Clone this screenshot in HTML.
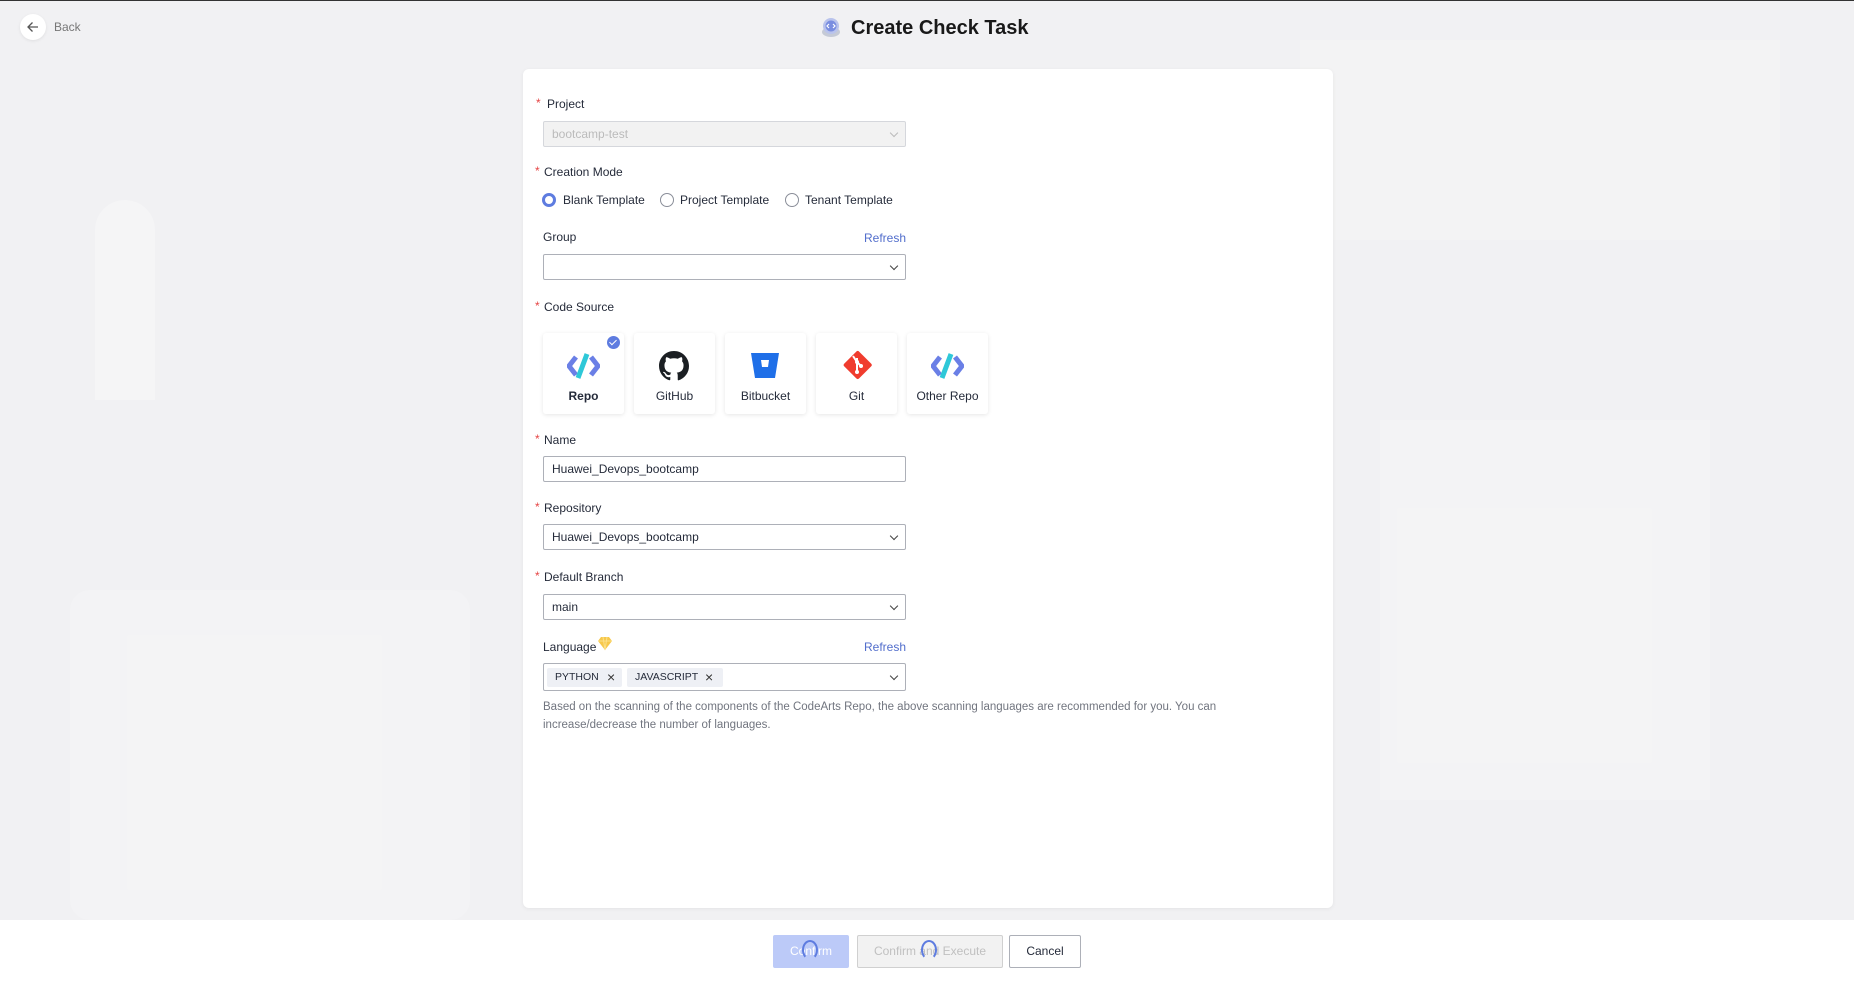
<!DOCTYPE html>
<html><head><meta charset="utf-8"><style>
*{box-sizing:border-box;margin:0;padding:0}
body{width:1854px;height:981px;overflow:hidden;background:#f1f1f3;font-family:"Liberation Sans",Arial,sans-serif;color:#252b3a;position:relative;font-size:12px}
.a{position:absolute}
.lbl{position:absolute;left:544px;font-size:12px;color:#252b3a}
.st{color:#e54545;position:absolute;left:-9px;top:-1px}
.inp{position:absolute;left:543px;width:363px;height:26px;border:1px solid #adb0b8;border-radius:2px;background:#fff;font-size:12px;padding-left:8px;line-height:24px;color:#252b3a}
.chev{position:absolute;right:8px;top:8px;width:6px;height:6px;border-right:1.2px solid #444;border-bottom:1.2px solid #444;transform:rotate(45deg)}
.radio{position:absolute;top:193px;width:14px;height:14px;border:1px solid #8a8e99;border-radius:50%;background:#fff}
.rt{position:absolute;top:193px;font-size:12px}
.card{position:absolute;top:333px;width:81px;height:81px;background:#fff;border-radius:3px;box-shadow:0 1px 4px rgba(0,0,0,.1)}
.card .t{position:absolute;top:56px;width:100%;text-align:center;font-size:12px;color:#252b3a}
.card svg{position:absolute;left:24px;top:18px}
.link{position:absolute;color:#526ecc;font-size:12px}
.tag{position:absolute;top:668px;height:19px;background:#eef0f5;border-radius:2px;font-size:10.5px;line-height:19px;padding-left:8px;color:#252b3a}
.x{position:absolute;top:669px;font-size:14px;line-height:17px;color:#333}
.btn{position:absolute;top:935px;height:33px;border-radius:2px;font-size:12px;text-align:center;line-height:31px}
</style></head><body>
<div class="a" style="left:0;top:0;width:1854px;height:1px;background:#333"></div>
<div class="a" style="left:70px;top:590px;width:400px;height:330px;background:rgba(255,255,255,.2);border-radius:20px"></div>
<div class="a" style="left:1380px;top:420px;width:330px;height:380px;background:rgba(255,255,255,.2)"></div>
<div class="a" style="left:1300px;top:40px;width:480px;height:200px;background:rgba(255,255,255,.15)"></div>
<div class="a" style="left:95px;top:200px;width:60px;height:200px;background:rgba(255,255,255,.3);border-radius:30px 30px 0 0"></div>
<div class="a" style="left:20px;top:14px;width:26px;height:26px;border-radius:50%;background:#fff;box-shadow:0 1px 3px rgba(0,0,0,.08)"></div>
<svg class="a" style="left:26px;top:20px" width="14" height="14" viewBox="0 0 14 14"><path d="M12 7H2M6.5 2.5L2 7l4.5 4.5" fill="none" stroke="#555" stroke-width="1.3"/></svg>
<div class="a" style="left:54px;top:20px;font-size:12px;color:#777">Back</div>
<svg class="a" style="left:820px;top:17px" width="22" height="22" viewBox="0 0 22 22"><ellipse cx="11" cy="15" rx="9" ry="5" fill="#c5cad6"/><circle cx="11" cy="9" r="8" fill="#b9c3ec"/><circle cx="11" cy="9" r="5.5" fill="#7a8ee0"/><path d="M9 7l-2 2 2 2M13 7l2 2-2 2" stroke="#fff" stroke-width="1.2" fill="none"/></svg>
<div class="a" style="left:851px;top:17px;font-size:20px;font-weight:bold;color:#191919">Create Check Task</div>
<div class="a" style="left:523px;top:69px;width:810px;height:839px;background:#fff;border-radius:6px;box-shadow:0 1px 4px rgba(0,0,0,.06)"></div>
<div class="lbl" style="top:97px;left:547px"><span class="st" style="left:-11px">*</span>Project</div>
<div class="inp" style="top:121px;background:#f2f2f2;border-color:#d5d7dc;color:#bbb">bootcamp-test<div class="chev" style="border-color:#bbb"></div></div>
<div class="lbl" style="top:165px"><span class="st">*</span>Creation Mode</div>
<div class="radio" style="left:542px;border:3px solid #5e7ce0"></div><div class="rt" style="left:563px">Blank Template</div>
<div class="radio" style="left:660px"></div><div class="rt" style="left:680px">Project Template</div>
<div class="radio" style="left:785px"></div><div class="rt" style="left:805px">Tenant Template</div>
<div class="lbl" style="top:230px;left:543px">Group</div>
<div class="link" style="left:864px;top:231px">Refresh</div>
<div class="inp" style="top:254px"><div class="chev"></div></div>
<div class="lbl" style="top:300px"><span class="st">*</span>Code Source</div>
<div class="card" style="left:543px"><svg width="33" height="30" viewBox="0 0 33 30"><path d="M9 6L2 15l7 9" fill="none" stroke="#6a7fe6" stroke-width="5"/><path d="M24 6l7 9-7 9" fill="none" stroke="#6a7fe6" stroke-width="5"/><path d="M20 3L11 27" stroke="#2ec8d8" stroke-width="5"/></svg><div class="t" style="font-weight:bold">Repo</div>
<div class="a" style="right:4px;top:3px;width:13px;height:13px;border-radius:50%;background:#5e7ce0"><div class="a" style="left:4px;top:2px;width:4px;height:7px;border-right:1.5px solid #fff;border-bottom:1.5px solid #fff;transform:rotate(45deg)"></div></div></div>
<div class="card" style="left:634px"><svg width="32" height="30" viewBox="0 0 16 16"><path fill="#1b1f23" d="M8 0C3.58 0 0 3.58 0 8c0 3.540 2.29 6.53 5.47 7.59.4.07.55-.17.55-.38v-1.33c-2.23.48-2.7-1.07-2.7-1.07-.36-.92-.89-1.170-.89-1.17-.73-.5.05-.49.05-.49.8.06 1.23.82 1.23.82.71 1.22 1.87.87 2.33.66.07-.52.28-.87.5-1.07-1.78-.2-3.64-.89-3.64-3.95 0-.87.31-1.59.82-2.15-.08-.2-.36-1.02.08-2.12 0 0 .67-.21 2.2.82a7.6 7.6 0 014 0c1.53-1.04 2.2-.82 2.2-.82.44 1.1.16 1.92.08 2.12.51.56.82 1.27.82 2.15 0 3.07-1.87 3.75-3.65 3.95.29.25.54.73.54 1.48v2.2c0 .21.15.46.55.38A8 8 0 0016 8c0-4.42-3.58-8-8-8z"/></svg><div class="t">GitHub</div></div>
<div class="card" style="left:725px"><svg width="32" height="30" viewBox="0 0 32 30"><path d="M2 2h28l-4 25H6z" fill="#1f6fe8"/><path d="M12 9h8l-1 7h-6z" fill="#fff"/></svg><div class="t">Bitbucket</div></div>
<div class="card" style="left:816px"><svg width="34" height="32" viewBox="0 0 34 32" style="top:16px"><rect x="7" y="5" width="21" height="21" rx="2" transform="rotate(45 17 16)" fill="#f03c2e"/><path d="M17 9v14M13 7l4 6 4 4" stroke="#fff" stroke-width="2" fill="none"/><circle cx="17" cy="13" r="2" fill="#fff"/><circle cx="17" cy="23" r="2" fill="#fff"/><circle cx="21" cy="17" r="2" fill="#fff"/></svg><div class="t">Git</div></div>
<div class="card" style="left:907px"><svg width="33" height="30" viewBox="0 0 33 30"><path d="M9 6L2 15l7 9" fill="none" stroke="#6a7fe6" stroke-width="5"/><path d="M24 6l7 9-7 9" fill="none" stroke="#6a7fe6" stroke-width="5"/><path d="M20 3L11 27" stroke="#2ec8d8" stroke-width="5"/></svg><div class="t">Other Repo</div></div>
<div class="lbl" style="top:433px"><span class="st">*</span>Name</div>
<div class="inp" style="top:456px">Huawei_Devops_bootcamp</div>
<div class="lbl" style="top:501px"><span class="st">*</span>Repository</div>
<div class="inp" style="top:524px">Huawei_Devops_bootcamp<div class="chev"></div></div>
<div class="lbl" style="top:570px"><span class="st">*</span>Default Branch</div>
<div class="inp" style="top:594px">main<div class="chev"></div></div>
<div class="lbl" style="top:640px;left:543px">Language</div>
<svg class="a" style="left:598px;top:636px" width="14" height="15" viewBox="0 0 14 15"><path d="M3 1h8l3 4-7 9-7-9z" fill="#f7c84a"/><path d="M0 5h14M5 1l2 13 2-13" stroke="#fbe08a" stroke-width="1" fill="none"/></svg>
<div class="link" style="left:864px;top:640px">Refresh</div>
<div class="inp" style="top:663px;height:28px"><div class="chev" style="top:9px"></div></div>
<div class="tag" style="left:547px;width:75px">PYTHON</div><div class="x" style="left:607px">×</div>
<div class="tag" style="left:627px;width:96px">JAVASCRIPT</div><div class="x" style="left:705px">×</div>
<div class="a" style="left:543px;top:698px;width:720px;font-size:11.5px;line-height:18px;color:#71757f">Based on the scanning of the components of the CodeArts Repo, the above scanning languages are recommended for you. You can increase/decrease the number of languages.</div>
<div class="a" style="left:0;top:920px;width:1854px;height:61px;background:#fff"></div>
<div class="btn" style="left:773px;width:76px;background:#bccaf8;color:#fff;border:1px solid #bccaf8">Confirm</div>
<div class="btn" style="left:857px;width:146px;background:#f2f2f2;color:#c0c0c0;border:1px solid #d0d0d0">Confirm and Execute</div>
<div class="btn" style="left:1009px;width:72px;background:#fff;color:#252b3a;border:1px solid #adb0b8">Cancel</div>
<div class="a" style="left:802px;top:940px;width:16px;height:20px;border:2px solid #5e7ce0;border-radius:50%;border-bottom-color:transparent"></div>
<div class="a" style="left:921px;top:940px;width:16px;height:20px;border:2px solid #5e7ce0;border-radius:50%;border-bottom-color:transparent"></div>
</body></html>
